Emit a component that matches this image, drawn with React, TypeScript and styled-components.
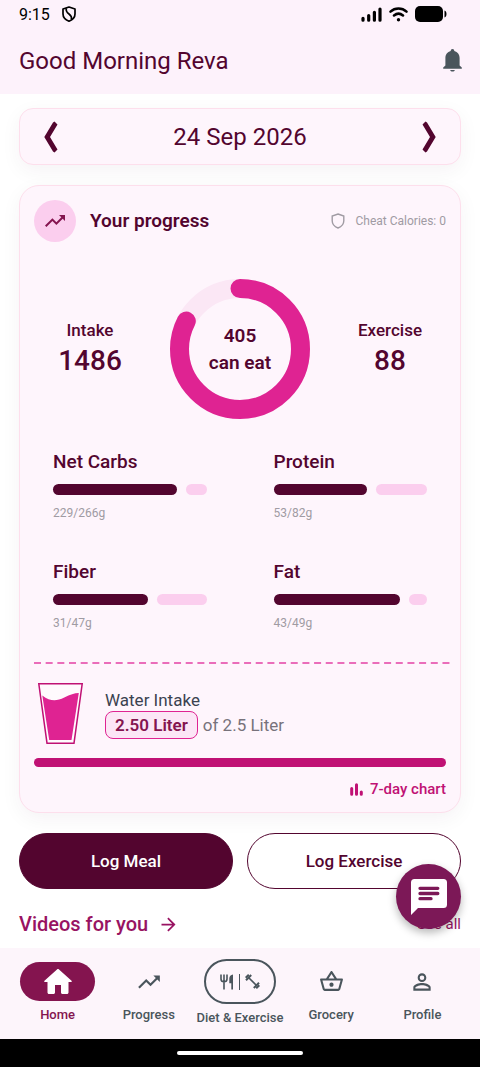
import React from 'react';
import styled, { createGlobalStyle } from 'styled-components';
import {
  MdArrowForward,
  MdOutlineShoppingBasket,
  MdPersonOutline,
  MdTrendingUp,
} from 'react-icons/md';

const color = {
  plum: '#53052f',
  berry: '#84144f',
  magenta: '#c01174',
  pink: '#df2392',
  blush: '#fbceee',
  track: '#fbe7f5',
  surface: '#fef5fc',
  header: '#fdf2fb',
  border: '#fddfec',
  slate: '#4a555c',
  muted: '#a09ba3',
};

const GlobalStyle = createGlobalStyle`
  *, *::before, *::after { box-sizing: border-box; }
  body {
    margin: 0;
    background: #ffffff;
    color: ${color.plum};
    font-family: Roboto, "Liberation Sans", sans-serif;
  }
  h1, h2, h3, p, dl, dd, dt { margin: 0; font-size: inherit; font-weight: inherit; }
  button { font: inherit; color: inherit; border: 0; padding: 0; background: none; cursor: pointer; }
  a { color: inherit; text-decoration: none; }
  svg { display: block; flex: none; }
`;

const Screen = styled.div`
  display: flex;
  flex-direction: column;
  min-height: 100vh;
`;

/* ---------- header ---------- */

const Header = styled.header`
  background: ${color.header};
  padding-bottom: 13px;
`;

const StatusBar = styled.div`
  display: flex;
  align-items: center;
  gap: 12px;
  height: 28px;
  padding: 0 33px 0 19px;
  color: #000000;
  font-size: 16px;
`;

const StatusIcons = styled.div`
  display: flex;
  align-items: center;
  gap: 7px;
  margin-left: auto;
`;

const TitleRow = styled.div`
  display: flex;
  align-items: center;
  justify-content: space-between;
  height: 53px;
  padding: 12px 18px 0 19px;
`;

const Title = styled.h1`
  font-size: 24px;
  line-height: 32px;
  font-weight: 400;
`;

/* ---------- body ---------- */

const Main = styled.main`
  display: flex;
  flex: 1;
  flex-direction: column;
  gap: 20px;
  padding: 14px 19px 8px;
`;

const Panel = styled.section`
  background: ${color.surface};
  border: 1px solid ${color.border};
  box-shadow: 0 6px 20px rgba(60, 20, 50, 0.05);
`;

const DatePanel = styled(Panel)`
  display: flex;
  align-items: center;
  justify-content: space-between;
  height: 57px;
  padding: 0 22px;
  border-radius: 14px;
`;

const DateText = styled.p`
  font-size: 24px;
  line-height: 32px;
`;

const ProgressPanel = styled(Panel)`
  padding: 14px;
  border-radius: 20px;
`;

const PanelHead = styled.div`
  display: flex;
  align-items: center;
  gap: 14px;
`;

const RoundIcon = styled.span`
  display: grid;
  place-items: center;
  width: 42px;
  height: 42px;
  border-radius: 50%;
  background: ${color.blush};
  color: ${color.berry};
`;

const PanelTitle = styled.h2`
  font-size: 19px;
  line-height: 24px;
  font-weight: 600;
`;

const Cheat = styled.p`
  display: flex;
  align-items: center;
  gap: 11px;
  margin-left: auto;
  color: ${color.muted};
  font-size: 12px;
`;

const Energy = styled.div`
  display: grid;
  grid-template-columns: 1fr 140px 1fr;
  align-items: center;
  gap: 24px;
  margin-top: 37px;
`;

const Stat = styled.dl`
  text-align: center;
  font-weight: 500;
`;

const StatLabel = styled.dt`
  font-size: 17px;
  line-height: 24px;
`;

const StatValue = styled.dd`
  font-size: 28px;
  line-height: 38px;
`;

const Donut = styled.div`
  display: grid;
  place-items: center;
  & > * { grid-area: 1 / 1; }
`;

const DonutText = styled.p`
  font-size: 19px;
  line-height: 27px;
  font-weight: 600;
  text-align: center;
`;

const Macros = styled.div`
  display: grid;
  grid-template-columns: 1fr 1fr;
  gap: 39px 67px;
  margin-top: 31px;
  padding: 0 19px;
`;

const Macro = styled.div`
  display: flex;
  flex-direction: column;
  gap: 10px;
`;

const MacroName = styled.h3`
  font-size: 19px;
  line-height: 24px;
  font-weight: 500;
`;

const MacroBar = styled.div`
  display: flex;
  gap: 9px;
  height: 11px;
`;

const BarPart = styled.span<{ $filled?: boolean }>`
  flex-basis: 0;
  border-radius: 6px;
  background: ${(p) => (p.$filled ? color.plum : color.blush)};
`;

const MacroAmount = styled.p`
  color: ${color.muted};
  font-size: 12px;
  line-height: 16px;
`;

const DashedRule = styled.svg`
  width: calc(100% + 4px);
  height: 2px;
  margin-top: 31px;
`;

const Water = styled.div`
  display: flex;
  align-items: center;
  gap: 22px;
  margin-top: 19px;
  padding-left: 4px;
  font-size: 17px;
`;

const WaterLabel = styled.h3`
  color: #3b4250;
  line-height: 22px;
`;

const WaterAmount = styled.p`
  display: flex;
  align-items: center;
  gap: 5px;
  color: #77727b;
`;

const Amount = styled.button`
  height: 28px;
  padding: 0 9px;
  border: 1px solid ${color.pink};
  border-radius: 8px;
  background: #fce6f6;
  color: ${color.berry};
  font-weight: 600;
`;

const WaterBar = styled.div`
  height: 9px;
  margin-top: 14px;
  border-radius: 5px;
  background: ${color.magenta};
`;

const ChartLink = styled.a`
  display: flex;
  align-items: center;
  justify-content: flex-end;
  gap: 7px;
  margin-top: 13px;
  color: ${color.magenta};
  font-size: 15px;
  line-height: 18px;
  font-weight: 500;
`;

const Actions = styled.div`
  display: grid;
  grid-template-columns: 1fr 1fr;
  gap: 14px;
`;

const ActionButton = styled.button<{ $primary?: boolean }>`
  height: 56px;
  border: 1px solid ${color.plum};
  border-radius: 28px;
  background: ${(p) => (p.$primary ? color.plum : '#ffffff')};
  color: ${(p) => (p.$primary ? '#ffffff' : color.plum)};
  font-size: 17px;
  font-weight: 500;
`;

const Videos = styled.div`
  display: flex;
  align-items: center;
  justify-content: space-between;
  height: 30px;
  color: #981362;
`;

const VideosTitle = styled.h2`
  display: flex;
  align-items: center;
  gap: 10px;
  font-size: 20px;
  line-height: 24px;
  font-weight: 500;
`;

const SeeAll = styled.a`
  font-size: 15px;
`;

/* ---------- bottom ---------- */

const Bottom = styled.footer`
  position: sticky;
  bottom: 0;
`;

const ChatButton = styled.button`
  position: absolute;
  right: 19px;
  bottom: 138px;
  display: grid;
  place-items: center;
  width: 65px;
  height: 65px;
  border-radius: 50%;
  background: #7c1857;
  color: #ffffff;
  box-shadow: 0 4px 8px rgba(0, 0, 0, 0.28);
`;

const Nav = styled.nav`
  display: grid;
  grid-template-columns: repeat(5, 1fr);
  height: 91px;
  padding: 11px 12px 0;
  background: #fdf5fb;
`;

const NavItem = styled.a<{ $active?: boolean }>`
  display: flex;
  flex-direction: column;
  align-items: center;
  color: ${(p) => (p.$active ? color.berry : color.slate)};
  font-size: 13px;
  line-height: 16px;
  font-weight: 500;
  white-space: nowrap;
`;

const NavIcon = styled.span<{ $kind?: 'active' | 'outlined' }>`
  display: flex;
  align-items: center;
  justify-content: center;
  gap: 5px;
  width: ${(p) => (p.$kind === 'outlined' ? '72px' : '75px')};
  height: ${(p) => (p.$kind === 'outlined' ? '45px' : '39px')};
  margin: ${(p) => (p.$kind === 'outlined' ? '0 0 6px' : '3px 0 6px')};
  border: ${(p) => (p.$kind === 'outlined' ? `2px solid ${color.slate}` : '0')};
  border-radius: 23px;
  background: ${(p) => (p.$kind === 'active' ? color.berry : 'transparent')};
  color: ${(p) => (p.$kind === 'active' ? '#ffffff' : 'inherit')};
`;

const NavDivider = styled.span`
  width: 1px;
  height: 16px;
  background: ${color.slate};
`;

const GestureBar = styled.div`
  display: grid;
  place-items: center;
  height: 28px;
  background: #000000;
`;

const GestureHandle = styled.span`
  width: 126px;
  height: 4px;
  border-radius: 2px;
  background: #ffffff;
`;

/* ---------- drawings ---------- */

const StatusShield = () => (
  <svg width="14" height="16" viewBox="0 0 14 16" fill="none" stroke="#000" strokeWidth="1.7">
    <path d="M7 1 13 3v5c0 3.300-2.500 5.800-6 7.200C3.500 13.800 1 11.300 1 8V3z" strokeLinejoin="round" />
    <path d="M4.300 2.200c-.6 2.800.6 4.300 2.700 5.800s3 3 2.400 5.500" />
  </svg>
);

const SignalIcon = () => (
  <svg width="21" height="15" viewBox="0 0 21 15" stroke="#000" strokeWidth="3.200" strokeLinecap="round">
    <path d="M2 11.300v1.900M7.700 8.600v4.600M13.400 5.300v7.900M19 2v11.200" />
  </svg>
);

const WifiIcon = () => (
  <svg width="19" height="15" viewBox="0 0 19 15" fill="none" stroke="#000" strokeWidth="2.500" strokeLinecap="round">
    <path d="M1.500 4.700C6 .5 13 .5 17.500 4.700M5 8.500c2.700-2.300 6.300-2.300 9 0" />
    <circle cx="9.500" cy="12.700" r="1.700" fill="#000" stroke="none" />
  </svg>
);

const BatteryIcon = () => (
  <svg width="32" height="16" viewBox="0 0 32 16">
    <rect width="28" height="16" rx="5" />
    <path d="M29.500 4.500c1.300.5 2 1.700 2 3.500s-.7 3-2 3.500z" />
  </svg>
);

const BellIcon = () => (
  <svg width="19" height="23" viewBox="0 0 19 23" fill={color.slate}>
    <path d="M9.500 0c1.100 0 1.800.8 1.800 2 3.300.8 5.300 3.500 5.300 7v7.500l2.200 2.100v1.100H.2v-1.100l2.200-2.100V9c0-3.500 2-6.200 5.300-7 0-1.200.7-2 1.800-2z" />
    <path d="M7.200 20.900h4.600c-.3 1-1.100 1.700-2.300 1.700s-2-.7-2.300-1.700z" />
  </svg>
);

const Chevron = ({ right }: { right?: boolean }) => (
  <svg width="18" height="32" viewBox="0 0 18 32" fill={color.plum}>
    <path
      d={
        right
          ? 'M2.500 3.500 5.500.5 7 1.500 15.700 16 7 30.500l-1.500 1-3-3L10 16z'
          : 'M15.500 3.500 12.500.5 11 1.500 2.300 16 11 30.500l1.500 1 3-3L8 16z'
      }
    />
  </svg>
);

const ShieldOutline = () => (
  <svg width="14" height="16" viewBox="0 0 14 16" fill="none" stroke={color.muted} strokeWidth="1.400">
    <path d="M7 1 12.800 3v4.800c0 3.300-2.300 5.900-5.800 7.200-3.500-1.300-5.800-3.900-5.800-7.200V3z" />
  </svg>
);

const DonutChart = ({ ratio }: { ratio: number }) => {
  const r = 60.5;
  const length = 2 * Math.PI * r;
  return (
    <svg width="140" height="140" viewBox="0 0 140 140" fill="none" strokeWidth="19">
      <circle cx="70" cy="70" r={r} stroke={color.track} />
      <circle
        cx="70"
        cy="70"
        r={r}
        stroke={color.pink}
        strokeLinecap="round"
        strokeDasharray={`${length * ratio} ${length}`}
        transform="rotate(-90 70 70)"
      />
    </svg>
  );
};

const GlassIcon = () => (
  <svg width="45" height="61" viewBox="0 0 45 61">
    <path d="M.8.800h43.400L36 60.200H9z" fill="#fffafd" stroke={color.magenta} strokeWidth="1.500" />
    <path d="M4.300 12.500c8 6 14 6 22 2 6-3 10-4.500 14.500-4.500L33.500 57H11.200z" fill={color.pink} />
  </svg>
);

const ChartIcon = () => (
  <svg width="13" height="13" viewBox="0 0 13 13" stroke={color.magenta} strokeWidth="3" strokeLinecap="round">
    <path d="M1.700 5.500v5.800M6.500 1.700v9.600M11.300 9v2.300" />
  </svg>
);

const HomeIcon = () => (
  <svg width="36" height="36" viewBox="0 0 24 24" fill="currentColor">
    <path d="M10 19v-5h4v5c0 .55.45 1 1 1h3c.55 0 1-.45 1-1v-7h1.700c.46 0 .68-.57.33-.87L12.670 3.600c-.38-.34-.96-.34-1.340 0l-8.360 7.530c-.34.3-.13.87.33.87H5v7c0 .55.45 1 1 1h3c.55 0 1-.45 1-1z" />
  </svg>
);

const CutleryIcon = () => (
  <svg width="14" height="16" viewBox="0 0 14 16" fill="none" stroke="currentColor" strokeWidth="1.600">
    <path d="M1 .500V5c0 1.800 1.200 2.700 3 2.700S7 6.800 7 5V.500M4 .500V15.500" />
    <path d="M13 .500v15h-1.700V9.300H9.300V4.500c0-2.300 1.500-3.700 3.700-4z" fill="currentColor" stroke="none" />
  </svg>
);

const DumbbellIcon = () => (
  <svg width="15" height="15" viewBox="0 0 15 15" fill="none" stroke="currentColor" strokeWidth="2">
    <path d="M3.500 3.500l8 8" strokeWidth="1.700" />
    <path d="M1 6.200 6.200 1M8.800 14 14 8.800" />
    <path d="M.7 3.800 3.800.7M11.200 14.300l3.100-3.100" />
  </svg>
);

const ChatIcon = () => (
  <svg width="36" height="36" viewBox="0 0 36 36">
    <path d="M3.500 0h29A3.500 3.500 0 0 1 36 3.500v22a3.500 3.500 0 0 1-3.500 3.500H7l-7 7V3.500A3.500 3.500 0 0 1 3.500 0z" fill="currentColor" />
    <path d="M9 9.300h17.800M9 14.500h17.800M9 19.700h11" stroke="#7c1857" strokeWidth="3.300" strokeLinecap="round" />
  </svg>
);

/* ---------- data ---------- */

const macros = [
  { name: 'Net Carbs', value: 229, goal: 266 },
  { name: 'Protein', value: 53, goal: 82 },
  { name: 'Fiber', value: 31, goal: 47 },
  { name: 'Fat', value: 43, goal: 49 },
];

export default function App() {
  return (
    <Screen>
      <GlobalStyle />
      <Header>
        <StatusBar>
          <span>9:15</span>
          <StatusShield />
          <StatusIcons>
            <SignalIcon />
            <WifiIcon />
            <BatteryIcon />
          </StatusIcons>
        </StatusBar>
        <TitleRow>
          <Title>Good Morning Reva</Title>
          <button aria-label="Notifications"><BellIcon /></button>
        </TitleRow>
      </Header>

      <Main>
        <DatePanel>
          <button aria-label="Previous day"><Chevron /></button>
          <DateText>24 Sep 2026</DateText>
          <button aria-label="Next day"><Chevron right /></button>
        </DatePanel>

        <ProgressPanel>
          <PanelHead>
            <RoundIcon><MdTrendingUp size={24} /></RoundIcon>
            <PanelTitle>Your progress</PanelTitle>
            <Cheat><ShieldOutline />Cheat Calories: 0</Cheat>
          </PanelHead>

          <Energy>
            <Stat>
              <StatLabel>Intake</StatLabel>
              <StatValue>1486</StatValue>
            </Stat>
            <Donut>
              <DonutChart ratio={0.825} />
              <DonutText>405<br />can eat</DonutText>
            </Donut>
            <Stat>
              <StatLabel>Exercise</StatLabel>
              <StatValue>88</StatValue>
            </Stat>
          </Energy>

          <Macros>
            {macros.map((m) => (
              <Macro key={m.name}>
                <MacroName>{m.name}</MacroName>
                <MacroBar>
                  <BarPart $filled style={{ flexGrow: m.value }} />
                  <BarPart style={{ flexGrow: m.goal - m.value }} />
                </MacroBar>
                <MacroAmount>{m.value}/{m.goal}g</MacroAmount>
              </Macro>
            ))}
          </Macros>

          <DashedRule>
            <line x1="0" y1="1" x2="100%" y2="1" stroke="#ea6dba" strokeWidth="2" strokeDasharray="7 4.670" />
          </DashedRule>

          <Water>
            <GlassIcon />
            <div>
              <WaterLabel>Water Intake</WaterLabel>
              <WaterAmount>
                <Amount>2.50 Liter</Amount>
                of 2.5 Liter
              </WaterAmount>
            </div>
          </Water>
          <WaterBar />
          <ChartLink href="#chart"><ChartIcon />7-day chart</ChartLink>
        </ProgressPanel>

        <Actions>
          <ActionButton $primary>Log Meal</ActionButton>
          <ActionButton>Log Exercise</ActionButton>
        </Actions>

        <Videos>
          <VideosTitle>Videos for you <MdArrowForward size={21} /></VideosTitle>
          <SeeAll href="#videos">See all</SeeAll>
        </Videos>
      </Main>

      <Bottom>
        <ChatButton aria-label="Chat"><ChatIcon /></ChatButton>
        <Nav>
          <NavItem href="#home" $active>
            <NavIcon $kind="active"><HomeIcon /></NavIcon>
            Home
          </NavItem>
          <NavItem href="#progress">
            <NavIcon><MdTrendingUp size={26} /></NavIcon>
            Progress
          </NavItem>
          <NavItem href="#diet">
            <NavIcon $kind="outlined">
              <CutleryIcon />
              <NavDivider />
              <DumbbellIcon />
            </NavIcon>
            Diet &amp; Exercise
          </NavItem>
          <NavItem href="#grocery">
            <NavIcon><MdOutlineShoppingBasket size={25} /></NavIcon>
            Grocery
          </NavItem>
          <NavItem href="#profile">
            <NavIcon><MdPersonOutline size={26} /></NavIcon>
            Profile
          </NavItem>
        </Nav>
        <GestureBar><GestureHandle /></GestureBar>
      </Bottom>
    </Screen>
  );
}
